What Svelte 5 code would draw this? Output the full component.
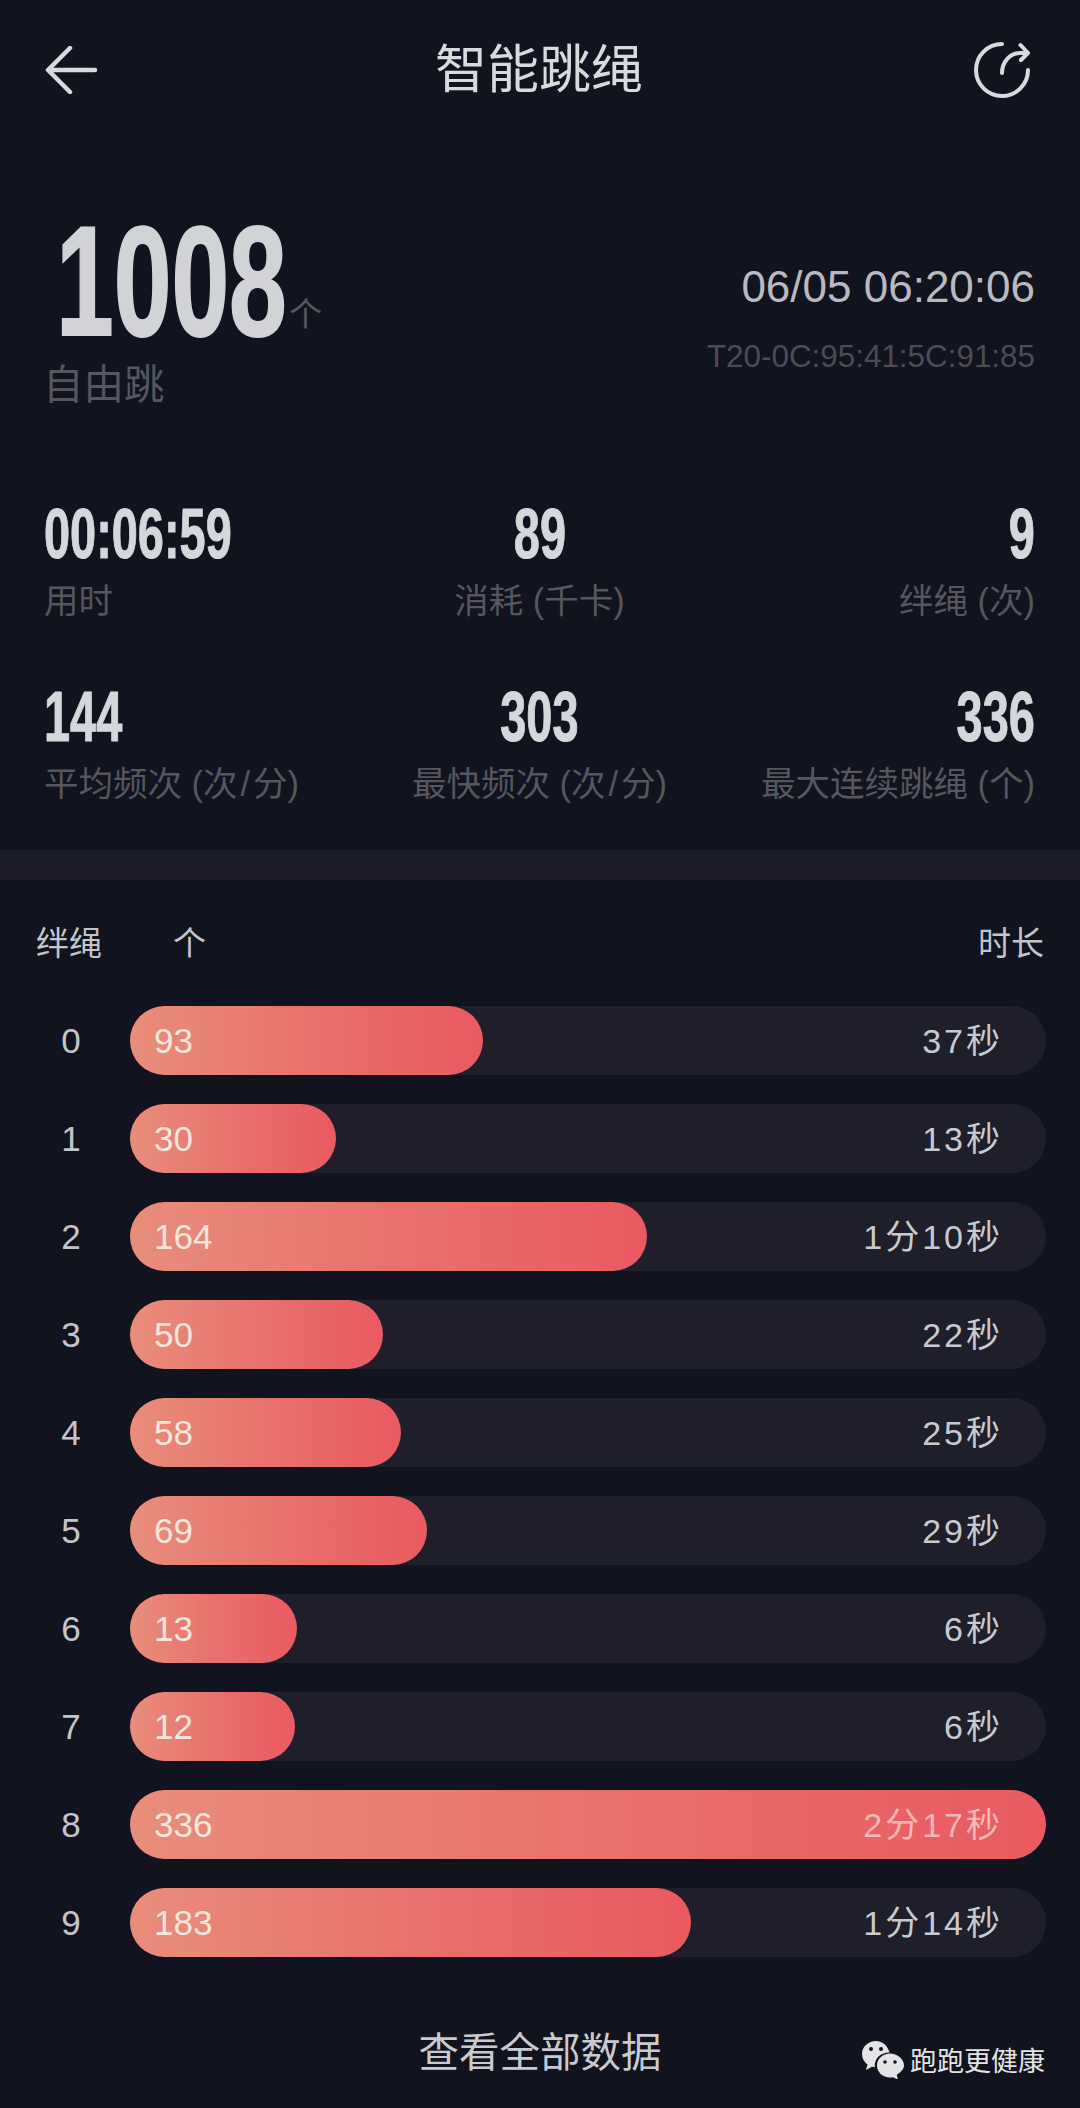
<script>
	const topStats = [
		{ value: '00:06:59', label: '用时' },
		{ value: '89', label: '消耗 (千卡)' },
		{ value: '9', label: '绊绳 (次)' },
		{ value: '144', label: '平均频次 (次\u200a/\u200a分)' },
		{ value: '303', label: '最快频次 (次\u200a/\u200a分)' },
		{ value: '336', label: '最大连续跳绳 (个)' }
	];

	const rows = [
		{ trips: 0, count: 93, width: 353, time: '37秒' },
		{ trips: 1, count: 30, width: 206, time: '13秒' },
		{ trips: 2, count: 164, width: 517, time: '1分10秒' },
		{ trips: 3, count: 50, width: 253, time: '22秒' },
		{ trips: 4, count: 58, width: 271, time: '25秒' },
		{ trips: 5, count: 69, width: 297, time: '29秒' },
		{ trips: 6, count: 13, width: 167, time: '6秒' },
		{ trips: 7, count: 12, width: 165, time: '6秒' },
		{ trips: 8, count: 336, width: 916, time: '2分17秒' },
		{ trips: 9, count: 183, width: 561, time: '1分14秒' }
	];
</script>

<div class="page">
	<header class="topbar">
		<svg class="back" width="54" height="48" viewBox="0 0 54 48" fill="none" stroke="currentColor" stroke-width="4.5" stroke-linecap="round" stroke-linejoin="round">
			<path d="M50 24H4M25 2 3 24l22 22" />
		</svg>
		<h1>智能跳绳</h1>
		<svg class="share" width="60" height="60" viewBox="0 0 60 60" fill="none" stroke="currentColor" stroke-width="4" stroke-linecap="round" stroke-linejoin="round">
			<path d="M30 4A26 26 0 1 0 56 30" />
			<path d="M30 33c0-11 8-20 18-20h8M48.500 5 56 13l-7 7" />
		</svg>
	</header>

	<section class="summary">
		<div>
			<div class="total"><span class="total-num">1008</span><span class="unit">个</span></div>
			<div class="mode">自由跳</div>
		</div>
		<div class="device">
			<div class="date">06/05 06:20:06</div>
			<div class="mac">T20-0C:95:41:5C:91:85</div>
		</div>
	</section>

	<section class="stats">
		{#each topStats as stat}
			<div class="stat">
				<div class="stat-value"><span>{stat.value}</span></div>
				<div class="stat-label">{stat.label}</div>
			</div>
		{/each}
	</section>

	<div class="divider"></div>

	<section class="breakdown">
		<div class="table-head">
			<span class="head-trips">绊绳</span>
			<span class="head-count">个</span>
			<span class="head-time">时长</span>
		</div>
		<div class="rows">
			{#each rows as row}
				<div class="row">
					<span class="trips">{row.trips}</span>
					<div class="track" class:full={row.width === 916}>
						<div class="fill" style="width: {row.width}px"></div>
						<span class="count">{row.count}</span>
						<span class="time">{row.time}</span>
					</div>
				</div>
			{/each}
		</div>
	</section>

	<div class="more">查看全部数据</div>

	<div class="watermark">
		<svg width="42" height="38" viewBox="0 0 42 38">
			<path fill="#e4e4e6" d="M14 0C6.500 0 0 5.500 0 13c0 4.500 2.300 8 5.500 10.500L4 29l6-3.200c1 .3 1.800.4 2.800.5C12 18 18 11.500 27.500 11.500 26 5 20.500 0 14 0z" />
			<path fill="#e4e4e6" d="M28 12.500c-7 0-13 5-13 12s6 12 13 12c1 0 2 0 3-.3l5 2.500-1.300-4.700C39 31 42 28 42 24.500c0-7-7-12-14-12z" />
			<circle cx="9" cy="8" r="2" fill="#11131e" />
			<circle cx="19" cy="8" r="2" fill="#11131e" />
			<circle cx="23" cy="21" r="1.800" fill="#11131e" />
			<circle cx="33" cy="21" r="1.800" fill="#11131e" />
		</svg>
		<span>跑跑更健康</span>
	</div>
</div>

<style>
	:global(body) {
		margin: 0;
		background: #11131e;
	}

	.page {
		position: relative;
		width: 1080px;
		height: 2108px;
		overflow: hidden;
		background: #11131e;
		color: #d6d7db;
		font-family: 'Liberation Sans', 'Noto Sans CJK SC', sans-serif;
	}

	.topbar {
		display: flex;
		align-items: center;
		justify-content: space-between;
		height: 60px;
		padding: 40px 48px 0 45px;
	}

	.topbar h1 {
		margin: 0 0 0 7px;
		font-size: 52px;
		font-weight: 400;
		line-height: 60px;
		color: #d9dade;
	}

	.back,
	.share {
		color: #d9dade;
	}

	.summary {
		display: flex;
		justify-content: space-between;
		align-items: flex-start;
		padding: 109px 45px 0 43px;
	}

	.total {
		display: flex;
		align-items: flex-end;
		height: 145px;
		margin-left: 13px;
	}

	/* no condensed face is installed, so the digits are squeezed */
	.total-num {
		display: inline-block;
		width: 231px;
		transform: scaleX(0.665);
		transform-origin: left;
		font-weight: 700;
		font-size: 156px;
		line-height: 145px;
		-webkit-text-stroke: 2px #d2d3d7;
		color: #d2d3d7;
	}

	.unit {
		margin-left: 2px;
		margin-bottom: 14px;
		font-size: 33px;
		line-height: 50px;
		color: #55565f;
	}

	.mode {
		margin-top: 6px;
		font-size: 40.500px;
		line-height: 50px;
		color: #55565f;
	}

	.device {
		padding-top: 53px;
		text-align: right;
	}

	.date {
		font-size: 44px;
		line-height: 50px;
		color: #b9bac0;
	}

	.mac {
		margin-top: 28px;
		font-size: 31.400px;
		line-height: 34px;
		color: #4b4c55;
	}

	.stats {
		display: grid;
		grid-template-columns: repeat(3, 1fr);
		row-gap: 58px;
		padding: 88px 45px 0 44px;
	}

	.stat {
		text-align: center;
	}

	.stat:nth-child(3n + 1) {
		text-align: left;
	}

	.stat:nth-child(3n) {
		text-align: right;
	}

	.stat-value {
		font-weight: 700;
		font-size: 70px;
		line-height: 72px;
		-webkit-text-stroke: 1px #d6d7db;
		color: #d6d7db;
	}

	.stat-value span {
		display: inline-block;
		transform: scaleX(0.67);
		transform-origin: center;
	}

	.stat:nth-child(3n + 1) .stat-value span {
		transform-origin: left;
	}

	.stat:nth-child(3n) .stat-value span {
		transform-origin: right;
	}

	.stat-label {
		margin-top: 9px;
		font-size: 34.500px;
		line-height: 44px;
		white-space: nowrap;
		color: #55565f;
	}

	.divider {
		height: 30px;
		margin-top: 44px;
		background: #1b1c27;
	}

	.table-head {
		display: flex;
		align-items: center;
		height: 44px;
		margin-top: 39px;
		padding: 0 36px;
		font-size: 33px;
		color: #c4c5cb;
	}

	.head-count {
		margin-left: 71px;
	}

	.head-time {
		margin-left: auto;
	}

	.rows {
		display: flex;
		flex-direction: column;
		gap: 29px;
		margin-top: 43px;
	}

	.row {
		display: flex;
		align-items: center;
		height: 69px;
	}

	.trips {
		width: 130px;
		box-sizing: border-box;
		padding-left: 12px;
		text-align: center;
		font-size: 35px;
		color: #c4c5cb;
	}

	.track {
		position: relative;
		display: flex;
		align-items: center;
		justify-content: space-between;
		width: 916px;
		height: 69px;
		box-sizing: border-box;
		padding: 0 43px 0 24px;
		border-radius: 35px;
		background: #1e1f2b;
		font-size: 34px;
	}

	.fill {
		position: absolute;
		left: 0;
		top: 0;
		bottom: 0;
		border-radius: 35px;
		background: linear-gradient(90deg, #e98d7b 0%, #e86f6c 55%, #ea5a60 100%);
	}

	.count {
		position: relative;
		font-size: 35px;
		color: #f8e7dd;
	}

	.time {
		position: relative;
		top: -2px;
		letter-spacing: 3px;
		color: #c9cad0;
	}

	.full .time {
		color: #f4b9b6;
	}

	.more {
		margin-top: 68px;
		text-align: center;
		font-size: 40.500px;
		line-height: 56px;
		color: #c9cad0;
	}

	.watermark {
		position: absolute;
		left: 862px;
		top: 2040px;
		display: flex;
		align-items: center;
		gap: 6px;
		font-size: 27px;
		color: #e4e4e6;
	}
</style>
